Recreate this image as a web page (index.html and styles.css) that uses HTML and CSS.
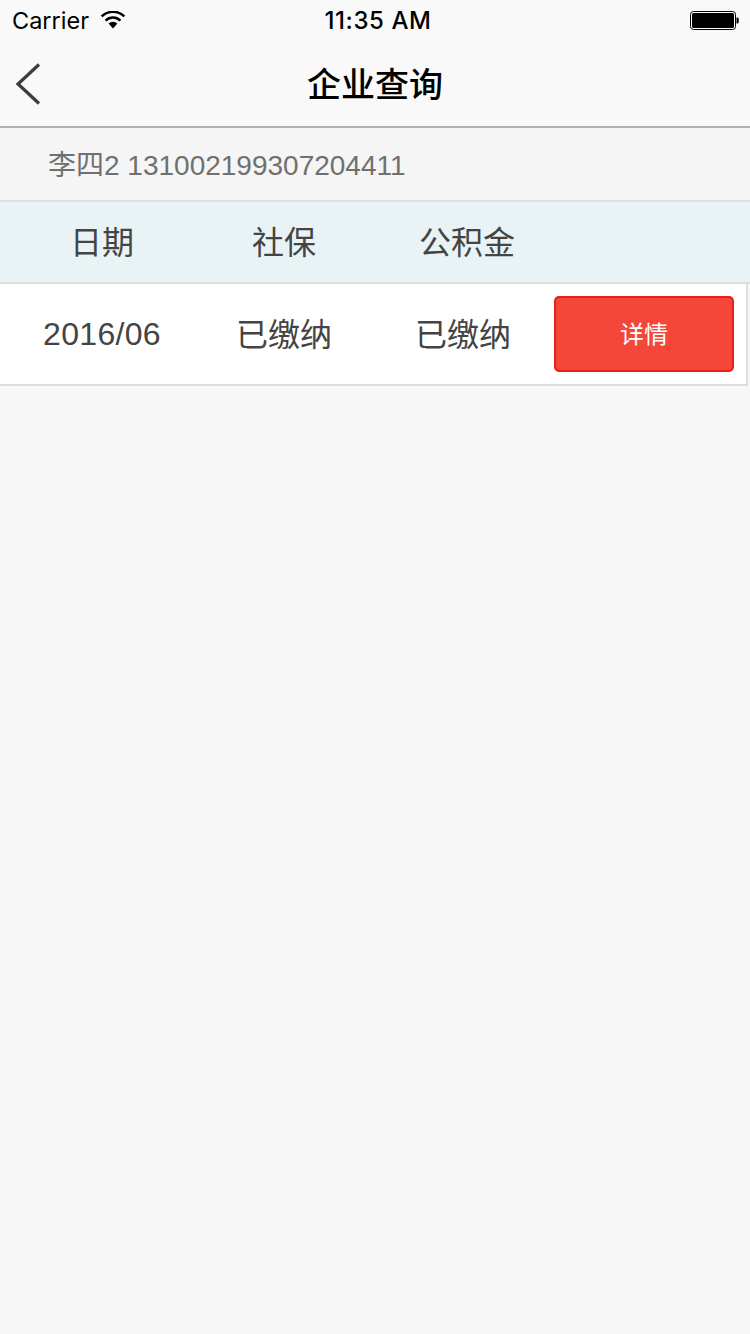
FILE: index.html
```html
<!DOCTYPE html>
<html lang="zh-CN">
<head>
<meta charset="utf-8">
<title>企业查询</title>
<link rel="stylesheet" href="styles.css">
</head>
<body>
<div class="status">
  <div class="status-left">
    <span class="carrier">Carrier</span>
    <svg class="wifi" width="26" height="18" viewBox="0 0 26 18"><path d="M13 17.5 8.6 12.6a6.4 6.4 0 0 1 8.8 0Z" fill="#000"/><path d="M5.6 9.6a10.6 10.6 0 0 1 14.8 0" fill="none" stroke="#000" stroke-width="2.5"/><path d="M1.6 5.4a16.4 16.4 0 0 1 22.8 0" fill="none" stroke="#000" stroke-width="2.5"/></svg>
  </div>
  <span class="time">11:35 AM</span>
  <svg class="battery" width="50" height="20" viewBox="0 0 50 20"><rect x="0.5" y="1.5" width="45" height="18" rx="3" fill="#fff" stroke="#000" stroke-width="1"/><rect x="2" y="3" width="42" height="15" rx="1.5" fill="#000"/><path d="M46.5 7.5h1a1.5 1.5 0 0 1 1.2 1.5v3a1.5 1.5 0 0 1-1.2 1.5h-1Z" fill="#000"/></svg>
</div>
<header class="nav">
  <svg class="back" width="26" height="42" viewBox="0 0 26 42"><path d="M24 1.5 3 21l21 19.5" fill="none" stroke="#3c3c3c" stroke-width="3.2"/></svg>
  <h1 class="title">企业查询</h1>
</header>
<div class="info">李四2 131002199307204411</div>
<div class="table-head">
  <span class="col col-date">日期</span>
  <span class="col col-social">社保</span>
  <span class="col col-fund">公积金</span>
</div>
<div class="row">
  <span class="col col-date col-num">2016/06</span>
  <span class="col col-social col-cjk">已缴纳</span>
  <span class="col col-fund-row col-cjk">已缴纳</span>
  <button class="detail" type="button">详情</button>
</div>
</body>
</html>
```
FILE: styles.css
```css
* { box-sizing: border-box; }
html, body { margin: 0; padding: 0; }
body {
  width: 750px;
  height: 1334px;
  background: #f7f7f7;
  font-family: "Liberation Sans", "Noto Sans CJK SC", sans-serif;
  line-height: 40px;
  overflow: hidden;
}
.status {
  height: 40px;
  background: #f9f9f9;
  display: flex;
  align-items: center;
  justify-content: space-between;
  padding: 0 10px 0 12px;
  position: relative;
  color: #000;
}
.status-left { display: flex; align-items: center; gap: 11px; }
.carrier { font-family: Inter, "Liberation Sans", sans-serif; font-size: 23.5px; font-weight: 400; padding-top: 2px; }
.wifi { margin-top: -1px; }
.time {
  position: absolute;
  left: 0;
  right: 0;
  padding: 2px 0 0 6px;
  text-align: center;
  font-family: Inter, "Liberation Sans", sans-serif;
  font-size: 24px;
  font-weight: 500;
  letter-spacing: 0.6px;
}
.nav {
  height: 88px;
  background: #f9f9f9;
  border-bottom: 2px solid #b2b2b2;
  display: flex;
  align-items: center;
  justify-content: center;
  position: relative;
}
.back { position: absolute; left: 15px; top: 23px; }
.title { margin: 0; padding-top: 3px; font-size: 34px; font-weight: 500; color: #000; }
.info {
  height: 74px;
  background: #f5f5f5;
  border-bottom: 2px solid #dedede;
  padding: 3px 0 0 48px;
  display: flex;
  align-items: center;
  font-size: 28px;
  color: #707070;
}
.table-head {
  height: 82px;
  background: #e9f2f4;
  border-bottom: 2px solid #dedede;
  padding-top: 2px;
  display: flex;
  align-items: center;
  font-size: 32px;
  color: #444;
}
.row {
  height: 102px;
  width: 748px;
  background: #fff;
  border-bottom: 2px solid #dedede;
  border-right: 2px solid #dedede;
  display: flex;
  align-items: center;
  font-size: 32px;
  color: #444;
}
.col { display: block; text-align: center; }
.col-date { width: 204px; }
.col-num { letter-spacing: 0.3px; }
.col-cjk { padding-top: 2px; }
.col-social { width: 160px; }
.col-fund { width: 206px; }
.col-fund-row { width: 202px; margin-left: -2px; margin-right: -10px; text-align: center; }
.detail {
  width: 180px;
  height: 76px;
  background: #f44639;
  border: 2px solid #e62117;
  border-radius: 5px;
  color: #fff;
  font-family: inherit;
  font-size: 24px;
  line-height: 40px;
  padding: 2px 0 0;
}
```
